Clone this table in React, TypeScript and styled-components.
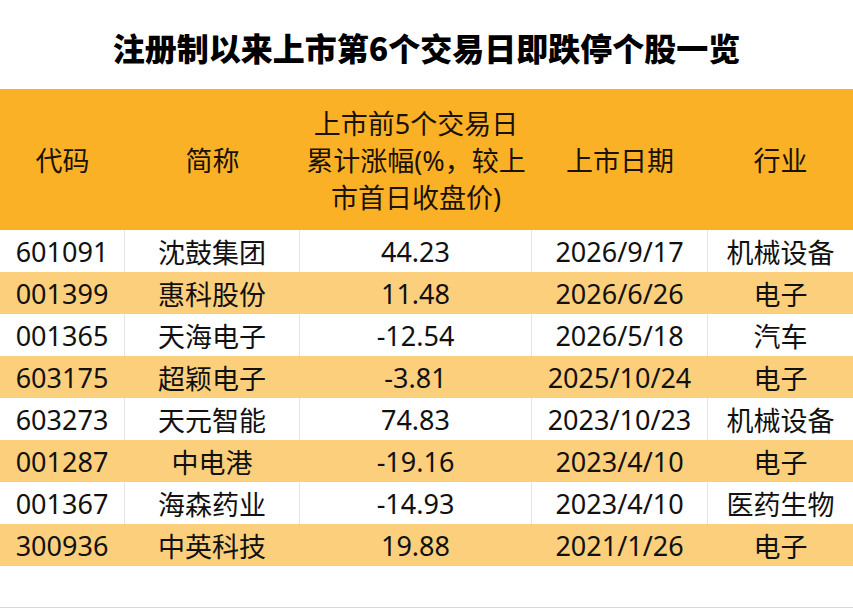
import React from "react";
import styled, { createGlobalStyle } from "styled-components";

const GlobalStyle = createGlobalStyle`
  html, body { margin: 0; padding: 0; background: #ffffff; }
  body { font-family: "Noto Sans", "Noto Sans CJK SC", sans-serif; }
`;

const COLS = "125px 175px 232px 176px 145px";

const Page = styled.div`
  width: 853px;
  height: 609px;
  background: #ffffff;
  display: flex;
  flex-direction: column;
  overflow: hidden;
`;

const Title = styled.h1`
  margin: 0;
  height: 89px;
  box-sizing: border-box;
  padding-top: 4px;
  display: flex;
  align-items: center;
  justify-content: center;
  font-family: "Noto Sans CJK SC", sans-serif;
  font-size: 32px;
  font-weight: 900;
  color: #000000;
  letter-spacing: 0;
`;

const Table = styled.div`
  display: flex;
  flex-direction: column;
`;

const HeaderRow = styled.div`
  display: grid;
  grid-template-columns: ${COLS};
  height: 141px;
  background: #fbb126;
`;

const HeaderCell = styled.div`
  display: flex;
  align-items: center;
  justify-content: center;
  text-align: center;
  font-family: "Noto Sans", "Noto Sans CJK SC", sans-serif;
  font-size: 27px;
  line-height: 37px;
  color: #1a1204;
  white-space: nowrap;
  padding-top: 2px;
`;

const Row = styled.div<{ $alt: boolean }>`
  display: grid;
  grid-template-columns: ${COLS};
  height: 42px;
  background: ${(p) => (p.$alt ? "#fccf7c" : "#ffffff")};
`;

const Cell = styled.div<{ $alt: boolean }>`
  display: flex;
  align-items: center;
  justify-content: center;
  font-family: "Noto Sans", "Noto Sans CJK SC", sans-serif;
  font-size: 27px;
  color: #111111;
  white-space: nowrap;
  border-right: 1px solid ${(p) => (p.$alt ? "transparent" : "#e4e4e4")};
  &:last-child { border-right: none; }
`;

const Footer = styled.div`
  height: 41px;
  border-bottom: 1px solid #d9d9d9;
`;

const rows = [
  ["601091", "沈鼓集团", "44.23", "2026/9/17", "机械设备"],
  ["001399", "惠科股份", "11.48", "2026/6/26", "电子"],
  ["001365", "天海电子", "-12.54", "2026/5/18", "汽车"],
  ["603175", "超颖电子", "-3.81", "2025/10/24", "电子"],
  ["603273", "天元智能", "74.83", "2023/10/23", "机械设备"],
  ["001287", "中电港", "-19.16", "2023/4/10", "电子"],
  ["001367", "海森药业", "-14.93", "2023/4/10", "医药生物"],
  ["300936", "中英科技", "19.88", "2021/1/26", "电子"],
];

export default function App() {
  return (
    <Page>
      <GlobalStyle />
      <Title>注册制以来上市第6个交易日即跌停个股一览</Title>
      <Table>
        <HeaderRow>
          <HeaderCell>代码</HeaderCell>
          <HeaderCell>简称</HeaderCell>
          <HeaderCell>
            上市前5个交易日
            <br />
            累计涨幅(%，较上
            <br />
            市首日收盘价)
          </HeaderCell>
          <HeaderCell>上市日期</HeaderCell>
          <HeaderCell>行业</HeaderCell>
        </HeaderRow>
        {rows.map((r, i) => {
          const alt = i % 2 === 1;
          return (
            <Row key={r[0]} $alt={alt}>
              {r.map((v, j) => (
                <Cell key={j} $alt={alt}>
                  {v}
                </Cell>
              ))}
            </Row>
          );
        })}
      </Table>
      <Footer />
    </Page>
  );
}
